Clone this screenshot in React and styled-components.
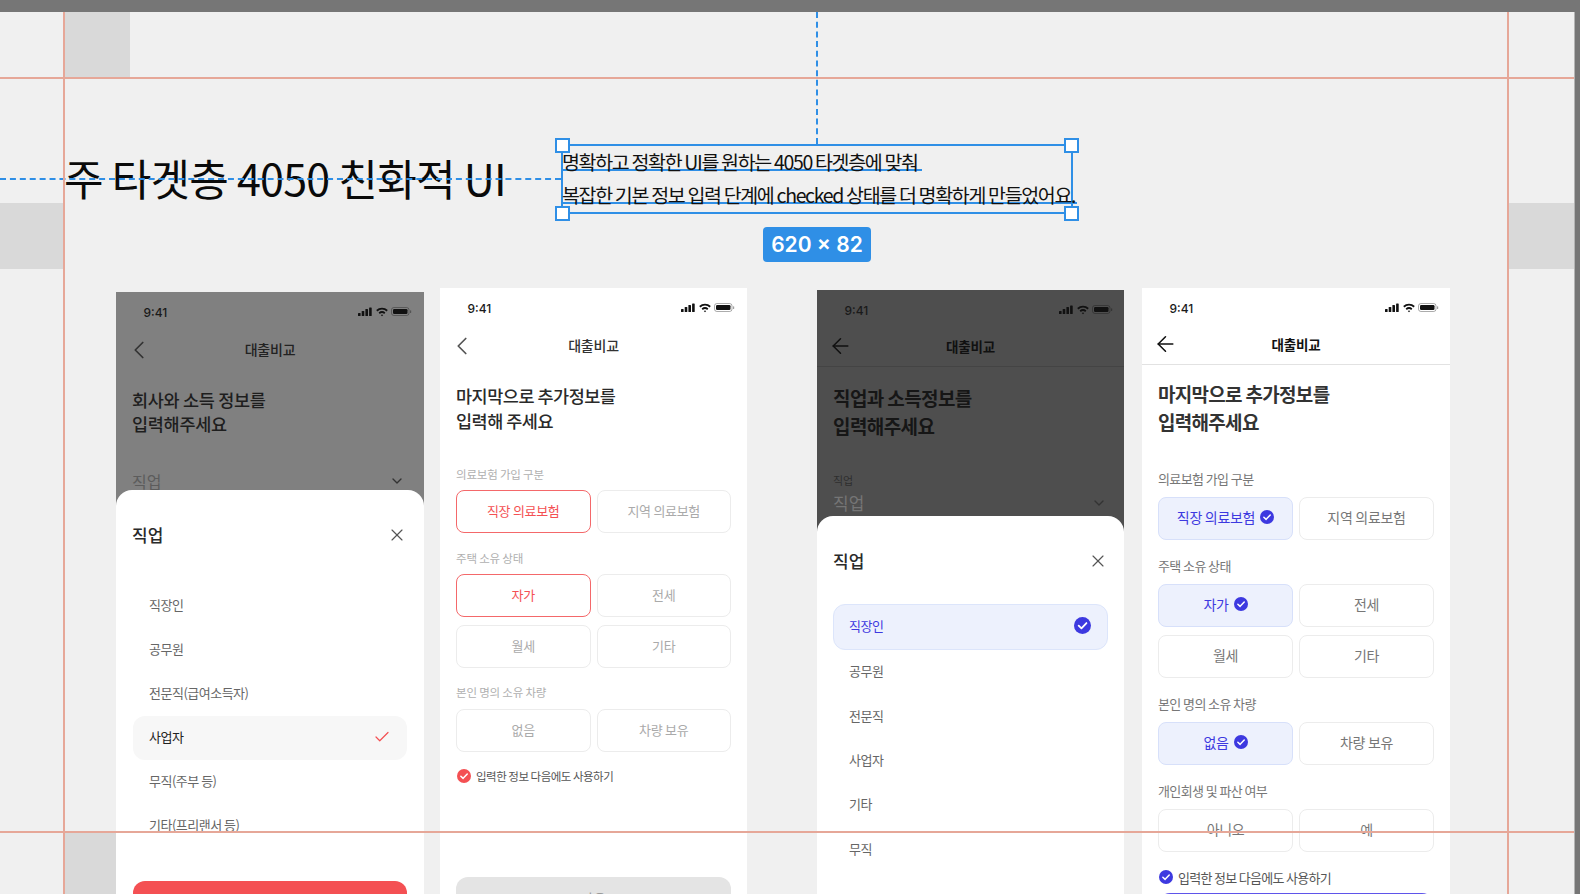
import React from "react";
import styled, { createGlobalStyle } from "styled-components";
import { ArrowLeft, Check, ChevronDown, ChevronLeft, X } from "lucide-react";

const BLUE = "#2f8fe6";
const GUIDE = "#e6a798";
const INDIGO = "#3d39e0";
const CORAL = "#f45053";

const GlobalStyle = createGlobalStyle`
  html, body {
    margin: 0;
    height: 894px;
    overflow: hidden;
    background: #f0f0f0;
    font-family: "Noto Sans CJK KR", "Noto Sans", sans-serif;
  }
  * { box-sizing: border-box; }
`;

const Page = styled.div`
  width: 1580px;
  height: 894px;
  display: grid;
  grid-template-rows: 12px 1fr;
  grid-template-columns: 1574px 6px;
  background: #767676;
`;

const TopBar = styled.div`
  grid-column: 1 / 3;
  background: #767676;
`;

const Canvas = styled.main`
  position: relative;
  overflow: hidden;
  background: #f0f0f0;
  padding-top: 132px;
`;

const SideStrip = styled.div`
  background: #767676;
  border-left: 1px solid #b4b4b4;
`;

/* figma layout grid blocks and guides */
const GridBlock = styled.div`
  position: absolute;
  left: ${(p) => p.$x}px;
  top: ${(p) => p.$y}px;
  width: ${(p) => p.$w}px;
  height: ${(p) => p.$h}px;
  background: #d9d9d9;
`;

const HGuide = styled.div`
  position: absolute;
  z-index: 5;
  left: 0;
  right: 0;
  top: ${(p) => p.$y}px;
  height: 2px;
  background: ${GUIDE};
`;

const VGuide = styled.div`
  position: absolute;
  z-index: 5;
  top: 0;
  bottom: 0;
  left: ${(p) => p.$x}px;
  width: 2px;
  background: ${GUIDE};
`;

const DashH = styled.div`
  position: absolute;
  z-index: 4;
  left: 0;
  top: 166px;
  width: 561px;
  border-top: 2px dashed ${BLUE};
`;

const DashV = styled.div`
  position: absolute;
  z-index: 4;
  left: 816px;
  top: 0;
  height: 132px;
  border-left: 2px dashed ${BLUE};
`;

const Header = styled.header`
  display: flex;
  align-items: center;
  height: 70px;
  padding-left: 64px;
`;

const Title = styled.h1`
  width: 497px;
  margin: 0;
  padding-bottom: 4px;
  font-size: 43px;
  line-height: 66px;
  font-weight: 400;
  letter-spacing: -0.75px;
  color: #0a0a0a;
  white-space: nowrap;
`;

const Selection = styled.div`
  position: relative;
  width: 512px;
  height: 70px;
  border: 2px solid ${BLUE};
  color: #111;
`;

const SelectedLine = styled.div`
  position: absolute;
  left: -1px;
  top: ${(p) => p.$y}px;
  width: ${(p) => p.$w}px;
  height: 25px;
  border-bottom: 2px solid ${BLUE};
  font-size: 19.5px;
  line-height: 32px;
  letter-spacing: -1.33px;
  white-space: nowrap;
`;

const Handle = styled.span`
  position: absolute;
  width: 15px;
  height: 15px;
  background: #fff;
  border: 2px solid ${BLUE};
  left: ${(p) => (p.$right ? "501px" : "-8px")};
  top: ${(p) => (p.$bottom ? "60px" : "-8px")};
`;

const SizeBadge = styled.div`
  position: absolute;
  left: 200px;
  top: 81px;
  width: 108px;
  height: 35px;
  border-radius: 4px;
  background: ${BLUE};
  color: #fff;
  font-family: Inter, "Noto Sans", sans-serif;
  font-size: 21px;
  font-weight: 600;
  line-height: 35px;
  text-align: center;
`;

const PhoneRow = styled.div`
  display: flex;
  align-items: flex-start;
  margin-top: 74px;
  padding-left: 116px;
`;

const Pair = styled.div`
  display: flex;
  align-items: flex-start;
  gap: ${(p) => p.$gap}px;
  margin-left: ${(p) => p.$offset || 0}px;
`;

const Phone = styled.section`
  width: ${(p) => p.$w || 308}px;
  height: 700px;
  margin-top: ${(p) => p.$top || 0}px;
  background: ${(p) => p.$bg || "#fff"};
  color: #222;
`;

const Backdrop = styled.div`
  height: ${(p) => p.$h}px;
  overflow: hidden;
`;

const StatusBar = styled.div`
  height: 40px;
  display: flex;
  align-items: center;
  justify-content: space-between;
  padding: 0 ${(p) => p.$right}px 0 27.5px;
  font-family: Inter, "Noto Sans", sans-serif;
  font-size: 12px;
  font-weight: 500;
  color: #1a1a1a;
`;

const Nav = styled.div`
  position: relative;
  height: ${(p) => (p.$line ? 37 : 36)}px;
  display: flex;
  align-items: center;
  justify-content: center;
  padding-bottom: ${(p) => (p.$bold ? 4 : 2)}px;
  border-bottom: ${(p) => (p.$line ? `1px solid ${p.$line}` : "none")};
  font-size: ${(p) => (p.$bold ? 13.5 : 14)}px;
  font-weight: ${(p) => (p.$bold ? 700 : 500)};
  letter-spacing: -0.2px;
  color: ${(p) => p.$color || "#333"};
`;

const NavBack = styled.span`
  position: absolute;
  left: ${(p) => p.$left}px;
  top: 50%;
  margin-top: ${(p) => p.$shift || 0}px;
  transform: translateY(-50%);
  display: flex;
`;

const Heading = styled.h2`
  margin: 0;
  padding: ${(p) => p.$top}px 16px 0;
  font-size: ${(p) => p.$size}px;
  line-height: ${(p) => p.$lh}px;
  font-weight: ${(p) => p.$weight || 500};
  letter-spacing: ${(p) => p.$spacing || -0.5}px;
  color: ${(p) => p.$color || "#2a2a2a"};
  white-space: nowrap;
`;

const FieldRow = styled.div`
  display: flex;
  align-items: center;
  justify-content: space-between;
  margin-top: ${(p) => p.$top || 0}px;
  padding: 0 ${(p) => p.$right}px 0 16px;
  font-size: ${(p) => p.$size}px;
  line-height: 16px;
  color: ${(p) => p.$color};
`;

const SmallLabel = styled.div`
  margin-top: 32px;
  padding-left: 16px;
  font-size: 11px;
  line-height: 16px;
  color: #2e2e2e;
`;

const Sheet = styled.div`
  background: #fff;
  border-radius: 16px 16px 0 0;
  height: 500px;
  padding: 33px ${(p) => p.$pad}px 0;
`;

const SheetHead = styled.div`
  display: flex;
  align-items: center;
  justify-content: space-between;
  height: 24px;
  margin: 0 0 0 ${(p) => (p.$flush ? 0 : -1)}px;
`;

const SheetTitle = styled.span`
  margin-top: -2px;
  font-size: 17px;
  font-weight: 500;
  color: #2a2a2a;
`;

const JobList = styled.ul`
  list-style: none;
  margin: ${(p) => p.$top}px 0 0;
  padding: 0;
`;

const JobItem = styled.li`
  display: flex;
  align-items: center;
  justify-content: space-between;
  height: ${(p) => (p.$tone === "indigo" ? 46 : p.$h || 44)}px;
  padding: 0 16px 3px ${(p) => (p.$tone === "indigo" ? 15 : 16)}px;
  border-radius: 12px;
  font-size: 13px;
  letter-spacing: -0.5px;
  color: ${(p) => (p.$tone === "indigo" ? INDIGO : p.$tone === "plain" ? "#222" : "#666")};
  background: ${(p) => (p.$tone === "indigo" ? "#edf1fd" : p.$tone === "plain" ? "#f7f7f7" : "transparent")};
  border: ${(p) => (p.$tone === "indigo" ? "1px solid #dce5fb" : "none")};
`;

const CtaButton = styled.div`
  height: 50px;
  margin-top: ${(p) => p.$top}px;
  border-radius: 12px;
  background: ${(p) => p.$bg};
  color: ${(p) => p.$color};
  font-size: 14px;
  line-height: 42px;
  text-align: center;
`;

const Form = styled.div`
  padding: 0 16px;
`;

const FormLabel = styled.div`
  margin-top: ${(p) => p.$top}px;
  font-size: ${(p) => p.$size}px;
  line-height: ${(p) => p.$lh}px;
  letter-spacing: ${(p) => (p.$size === 13 ? -0.6 : -0.2)}px;
  color: ${(p) => p.$color};
`;

const Choices = styled.div`
  display: grid;
  grid-template-columns: 1fr 1fr;
  gap: 8px 6px;
  margin-top: ${(p) => p.$top}px;
`;

const Choice = styled.div`
  height: 43px;
  display: flex;
  align-items: center;
  justify-content: center;
  gap: 5px;
  padding-bottom: ${(p) => (p.$size === 14 ? 4 : 2)}px;
  border-radius: 8px;
  font-size: ${(p) => p.$size}px;
  letter-spacing: -0.3px;
  border: 1px solid
    ${(p) => (p.$state === "red" ? "#f4686a" : p.$state === "blue" ? "#d7e0fa" : "#ececec")};
  background: ${(p) => (p.$state === "blue" ? "#edf1fd" : "#fff")};
  color: ${(p) =>
    p.$state === "red" ? "#f45053" : p.$state === "blue" ? INDIGO : p.$muted ? "#aaa" : "#777"};
`;

const RememberRow = styled.div`
  display: flex;
  align-items: center;
  gap: 5px;
  height: 16px;
  margin-top: ${(p) => p.$top}px;
  padding-left: 1px;
  font-size: ${(p) => p.$size}px;
  letter-spacing: ${(p) => (p.$size === 13 ? -0.7 : -0.5)}px;
  color: #555;
`;

const StatusIcons = () => (
  <svg width="54" height="12" viewBox="0 0 54 12" fill="#111">
    <rect x="0" y="7" width="2.6" height="3" rx="0.6" />
    <rect x="3.7" y="5" width="2.6" height="5" rx="0.6" />
    <rect x="7.4" y="3" width="2.6" height="7" rx="0.6" />
    <rect x="11.1" y="1.5" width="2.6" height="8.5" rx="0.6" />
    <path d="M18.2 4a8.6 8.6 0 0 1 11.6 0l-1.2 1.4a6.8 6.8 0 0 0-9.2 0z" />
    <path d="M20.6 6.5a5.2 5.2 0 0 1 6.8 0l-1.2 1.4a3.4 3.4 0 0 0-4.4 0z" />
    <path d="M22.8 8.9a2 2 0 0 1 2.4 0L24 10.3z" />
    <rect x="33.5" y="1.5" width="17.5" height="8" rx="2.4" fill="none" stroke="#111" strokeOpacity="0.35" />
    <rect x="35" y="3" width="14.5" height="5" rx="1.2" />
    <rect x="52" y="4.2" width="1.2" height="2.8" rx="0.5" fillOpacity="0.4" />
  </svg>
);

const CheckBadge = ({ size = 14, color = INDIGO }) => (
  <svg width={size} height={size} viewBox="0 0 16 16" style={{ flex: "none" }}>
    <circle cx="8" cy="8" r="8" fill={color} />
    <path d="M4.4 8.2 7 10.7l4.7-5" fill="none" stroke="#fff" strokeWidth="1.7" strokeLinecap="round" strokeLinejoin="round" />
  </svg>
);

const Status = ({ right }) => (
  <StatusBar $right={right}>
    <span>9:41</span>
    <StatusIcons />
  </StatusBar>
);

const RedFlow = () => (
  <Phone $w={307}>
    <Status right={12} />
    <Nav>
      <NavBack $left={7}><ChevronLeft size={30} color="#555" strokeWidth={1.4} /></NavBack>
      대출비교
    </Nav>
    <Heading $top={19} $size={17.5} $lh={25}>마지막으로 추가정보를<br />입력해 주세요</Heading>
    <Form>
      <FormLabel $top={33} $size={11.5} $lh={16} $color="#b0b0b0">의료보험 가입 구분</FormLabel>
      <Choices $top={8}>
        <Choice $size={13} $state="red">직장 의료보험</Choice>
        <Choice $size={13} $muted>지역 의료보험</Choice>
      </Choices>
      <FormLabel $top={17} $size={11.5} $lh={16} $color="#b0b0b0">주택 소유 상태</FormLabel>
      <Choices $top={8}>
        <Choice $size={13} $state="red">자가</Choice>
        <Choice $size={13} $muted>전세</Choice>
        <Choice $size={13} $muted>월세</Choice>
        <Choice $size={13} $muted>기타</Choice>
      </Choices>
      <FormLabel $top={16} $size={11.5} $lh={16} $color="#b0b0b0">본인 명의 소유 차량</FormLabel>
      <Choices $top={9}>
        <Choice $size={13} $muted>없음</Choice>
        <Choice $size={13} $muted>차량 보유</Choice>
      </Choices>
      <RememberRow $top={16} $size={11.5}>
        <CheckBadge size={14} color={CORAL} />
        입력한 정보 다음에도 사용하기
      </RememberRow>
      <CtaButton $top={93} $bg="#e4e4e4" $color="#999">다음</CtaButton>
    </Form>
  </Phone>
);

const BlueFlow = () => (
  <Phone>
    <Status right={11} />
    <Nav $line="#e2e2e2" $bold $color="#111">
      <NavBack $left={11} $shift={-2}><ArrowLeft size={25} color="#111" strokeWidth={1.5} /></NavBack>
      대출비교
    </Nav>
    <Heading $top={15} $size={19} $lh={28} $weight={600} $spacing={-0.7} $color="#333">마지막으로 추가정보를<br />입력해주세요</Heading>
    <Form>
      <FormLabel $top={34} $size={13} $lh={18} $color="#777">의료보험 가입 구분</FormLabel>
      <Choices $top={9}>
        <Choice $size={14} $state="blue">직장 의료보험 <CheckBadge /></Choice>
        <Choice $size={14}>지역 의료보험</Choice>
      </Choices>
      <FormLabel $top={17} $size={13} $lh={18} $color="#777">주택 소유 상태</FormLabel>
      <Choices $top={9}>
        <Choice $size={14} $state="blue">자가 <CheckBadge /></Choice>
        <Choice $size={14}>전세</Choice>
        <Choice $size={14}>월세</Choice>
        <Choice $size={14}>기타</Choice>
      </Choices>
      <FormLabel $top={17} $size={13} $lh={18} $color="#777">본인 명의 소유 차량</FormLabel>
      <Choices $top={9}>
        <Choice $size={14} $state="blue">없음 <CheckBadge /></Choice>
        <Choice $size={14}>차량 보유</Choice>
      </Choices>
      <FormLabel $top={17} $size={13} $lh={18} $color="#777">개인회생 및 파산 여부</FormLabel>
      <Choices $top={9}>
        <Choice $size={14}>아니오</Choice>
        <Choice $size={14}>예</Choice>
      </Choices>
      <RememberRow $top={17} $size={13}>
        <CheckBadge />
        입력한 정보 다음에도 사용하기
      </RememberRow>
      <CtaButton $top={8} $bg="#5f55ea" $color="#fff" />
    </Form>
  </Phone>
);

const jobsA = ["직장인", "공무원", "전문직(급여소득자)", "사업자", "무직(주부 등)", "기타(프리랜서 등)"];
const jobsB = ["공무원", "전문직", "사업자", "기타", "무직"];

const CoralSheetFlow = () => (
  <Phone $bg="#808080" $top={4}>
    <Backdrop $h={198}>
      <Status right={12} />
      <Nav $color="#222">
        <NavBack $left={8}><ChevronLeft size={30} color="#333" strokeWidth={1.4} /></NavBack>
        대출비교
      </Nav>
      <Heading $top={20} $size={17.5} $lh={24} $color="#1e1e1e" $spacing={-0.3}>회사와 소득 정보를<br />입력해주세요</Heading>
      <FieldRow $top={37} $size={16} $right={19} $color="#5c5c5c">
        직업
        <ChevronDown size={16} color="#333" />
      </FieldRow>
    </Backdrop>
    <Sheet $pad={17}>
      <SheetHead>
        <SheetTitle>직업</SheetTitle>
        <X size={20} color="#555" strokeWidth={1.4} />
      </SheetHead>
      <JobList $top={37}>
        {jobsA.map((job) => (
          <JobItem key={job} $tone={job === "사업자" ? "plain" : undefined}>
            {job}
            {job === "사업자" && <Check size={18} color={CORAL} strokeWidth={1.6} />}
          </JobItem>
        ))}
      </JobList>
      <CtaButton $top={33} $bg={CORAL} $color="#fff" />
    </Sheet>
  </Phone>
);

const IndigoSheetFlow = () => (
  <Phone $w={307} $bg="#4e4e4e" $top={2}>
    <Backdrop $h={226}>
      <Status right={11} />
      <Nav $line="#444" $bold $color="#111">
        <NavBack $left={11} $shift={-2}><ArrowLeft size={25} color="#111" strokeWidth={1.5} /></NavBack>
        대출비교
      </Nav>
      <Heading $top={17} $size={19} $lh={28} $weight={600} $color="#161616" $spacing={-0.6}>직업과 소득정보를<br />입력해주세요</Heading>
      <SmallLabel>직업</SmallLabel>
      <FieldRow $top={7} $size={17} $right={17} $color="#757575">
        직업
        <ChevronDown size={16} color="#333" />
      </FieldRow>
    </Backdrop>
    <Sheet $pad={16}>
      <SheetHead $flush>
        <SheetTitle>직업</SheetTitle>
        <X size={20} color="#555" strokeWidth={1.4} />
      </SheetHead>
      <JobList $top={31}>
        <JobItem $tone="indigo">직장인<CheckBadge size={17} /></JobItem>
        {jobsB.map((job) => (
          <JobItem key={job} $h={44.4}>{job}</JobItem>
        ))}
      </JobList>
    </Sheet>
  </Phone>
);

export default function App() {
  return (
    <Page>
      <GlobalStyle />
      <TopBar />
      <Canvas>
        <GridBlock $x={64} $y={0} $w={66} $h={66} />
        <GridBlock $x={0} $y={191} $w={64} $h={66} />
        <GridBlock $x={1508} $y={191} $w={66} $h={66} />
        <GridBlock $x={64} $y={820} $w={52} $h={70} />
        <HGuide $y={65} />
        <HGuide $y={819} />
        <VGuide $x={63} />
        <VGuide $x={1507} />
        <DashH />
        <DashV />

        <Header>
          <Title>주 타겟층 4050 친화적 UI</Title>
          <Selection>
            <SelectedLine $y={0} $w={360}>명확하고 정확한 UI를 원하는 4050 타겟층에 맞춰</SelectedLine>
            <SelectedLine $y={33} $w={515}>복잡한 기본 정보 입력 단계에 checked 상태를 더 명확하게 만들었어요.</SelectedLine>
            <Handle />
            <Handle $right />
            <Handle $bottom />
            <Handle $right $bottom />
            <SizeBadge>620 × 82</SizeBadge>
          </Selection>
        </Header>

        <PhoneRow>
          <Pair $gap={16}>
            <CoralSheetFlow />
            <RedFlow />
          </Pair>
          <Pair $gap={18} $offset={70}>
            <IndigoSheetFlow />
            <BlueFlow />
          </Pair>
        </PhoneRow>
      </Canvas>
      <SideStrip />
    </Page>
  );
}
